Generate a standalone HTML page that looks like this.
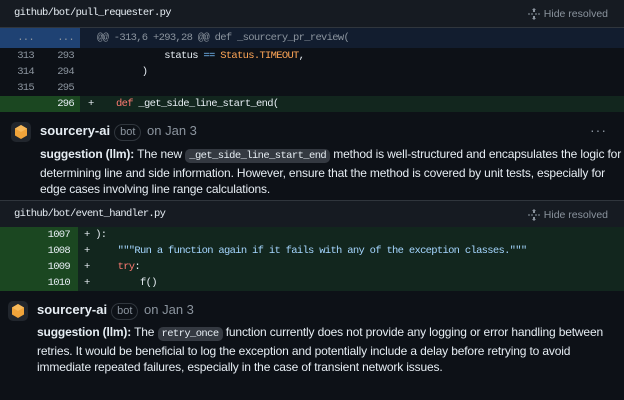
<!DOCTYPE html><html><head><style>
*{margin:0;padding:0;box-sizing:border-box}
body{width:624px;height:400px;background:#0d1117;font-family:"Liberation Sans",sans-serif;color:#e6edf3;overflow:hidden;position:relative}
.mono{font-family:"Liberation Mono",monospace;letter-spacing:-0.7px}
.hdr{position:absolute;left:0;width:624px;height:28px;background:#161b22;border-bottom:1px solid #30363d}
.hdr .f{position:absolute;left:14px;top:7px;font-size:10.5px;color:#e6edf3}
.hdr .h{position:absolute;right:16px;top:8px;font-size:10.5px;color:#8b949e}
.hdr .h svg{position:absolute;left:-16px;top:0}
.row{position:absolute;left:0;width:624px;height:16px;font-size:10.5px;line-height:16px}
.n{position:absolute;width:34px;text-align:right;color:#8b949e;font-family:"Liberation Mono",monospace;letter-spacing:-0.7px}
.c{position:absolute;white-space:pre}
.cm{position:absolute;left:0;width:624px;background:#0d1117}
.av{position:absolute;width:20px;height:20px;border-radius:5px;background:#21262d}
.av svg{position:absolute;left:3px;top:3px}
.nm{position:absolute;font-size:13px;font-weight:bold}
.bot{display:inline-block;border:1px solid #30363d;border-radius:9px;padding:0 5px;font-size:11px;color:#8b949e;font-weight:normal;margin-left:4px;line-height:15px}
.dt{color:#8b949e;font-weight:normal;margin-left:2px}
.tx{position:absolute;font-size:12px;line-height:16.5px;width:590px;letter-spacing:-0.15px}
.tx code{font-family:"Liberation Mono",monospace;font-size:10.5px;letter-spacing:-0.6px;background:#343941;border-radius:5px;padding:1px 4px}
.dots{position:absolute;right:17px;color:#8b949e;font-size:14px;letter-spacing:1px}
</style></head><body>
<div class="hdr" style="top:0"><span class="f mono">github/bot/pull_requester.py</span><span class="h"><svg width="12" height="12" viewBox="0 0 12 12" fill="#8b949e"><path d="M6 0l2 2H7v2H5V2H4zM6 12l2-2H7V8H5v2H4zM0 5.5h2v1H0zM3 5.5h2v1H3zM7 5.5h2v1H7zM10 5.5h2v1h-2z"/></svg>Hide resolved</span></div>
<div class="row" style="top:28px;height:20px;line-height:20px;background:#121d2f">
<div style="position:absolute;left:0;width:80px;height:20px;background:#1f4273"></div>
<span class="n" style="left:0;color:#8b949e">...</span><span class="n" style="left:40px;color:#8b949e">...</span>
<span class="c mono" style="left:97px;color:#8b949e">@@ -313,6 +293,28 @@ def _sourcery_pr_review(</span></div>
<div class="row" style="top:48px"><span class="n" style="left:0">313</span><span class="n" style="left:40px">293</span><span class="c mono" style="left:97px">            status <span style="color:#79c0ff">==</span> <span style="color:#ffa657">Status.TIMEOUT</span>,</span></div>
<div class="row" style="top:64px"><span class="n" style="left:0">314</span><span class="n" style="left:40px">294</span><span class="c mono" style="left:97px">        )</span></div>
<div class="row" style="top:80px"><span class="n" style="left:0">315</span><span class="n" style="left:40px">295</span></div>
<div class="row" style="top:96px;background:#12261e"><div style="position:absolute;left:0;width:80px;height:16px;background:#1b4721"></div><span class="n" style="left:40px;color:#e6edf3">296</span><span class="c mono" style="left:88px">+    <span style="color:#ff7b72">def</span> _get_side_line_start_end(</span></div>
<div class="cm" style="top:112px;height:88px">
<div class="av" style="left:11px;top:10px"><svg width="14" height="14" viewBox="0 0 14 14"><path d="M7 0l6 3.5v7L7 14 1 10.5v-7z" fill="#f0a43a"/><path d="M7 0l6 3.5L7 7 1 3.5z" fill="#f7b95a"/></svg></div>
<div class="nm" style="left:40px;top:11px">sourcery-ai<span class="bot">bot</span> <span class="dt">on Jan 3</span></div>
<div class="tx" style="left:40px;top:34px"><b>suggestion (llm):</b> The new <code>_get_side_line_start_end</code> method is well-structured and encapsulates the logic for determining line and side information. However, ensure that the method is covered by unit tests, especially for edge cases involving line range calculations.</div>
<div class="dots" style="top:10px">···</div></div>
<div class="hdr" style="top:200px;border-top:1px solid #30363d"><span class="f mono">github/bot/event_handler.py</span><span class="h"><svg width="12" height="12" viewBox="0 0 12 12" fill="#8b949e"><path d="M6 0l2 2H7v2H5V2H4zM6 12l2-2H7V8H5v2H4zM0 5.5h2v1H0zM3 5.5h2v1H3zM7 5.5h2v1H7zM10 5.5h2v1h-2z"/></svg>Hide resolved</span></div>
<div style="position:absolute;left:0;top:227px;width:624px;height:64px;background:#12261e"></div>
<div style="position:absolute;left:0;top:227px;width:78px;height:64px;background:#1b4721"></div>
<div class="row" style="top:227px"><span class="n" style="left:36px;color:#e6edf3">1007</span><span class="c mono" style="left:84px">+ ):</span></div>
<div class="row" style="top:243px"><span class="n" style="left:36px;color:#e6edf3">1008</span><span class="c mono" style="left:84px">+     <span style="color:#a5d6ff">"""Run a function again if it fails with any of the exception classes."""</span></span></div>
<div class="row" style="top:259px"><span class="n" style="left:36px;color:#e6edf3">1009</span><span class="c mono" style="left:84px">+     <span style="color:#ff7b72">try</span>:</span></div>
<div class="row" style="top:275px"><span class="n" style="left:36px;color:#e6edf3">1010</span><span class="c mono" style="left:84px">+         f()</span></div>
<div class="cm" style="top:291px;height:109px">
<div class="av" style="left:8px;top:10px"><svg width="14" height="14" viewBox="0 0 14 14"><path d="M7 0l6 3.5v7L7 14 1 10.5v-7z" fill="#f0a43a"/><path d="M7 0l6 3.5L7 7 1 3.5z" fill="#f7b95a"/></svg></div>
<div class="nm" style="left:37px;top:11px">sourcery-ai<span class="bot">bot</span> <span class="dt">on Jan 3</span></div>
<div class="tx" style="left:37px;top:33px"><b>suggestion (llm):</b> The <code>retry_once</code> function currently does not provide any logging or error handling between retries. It would be beneficial to log the exception and potentially include a delay before retrying to avoid immediate repeated failures, especially in the case of transient network issues.</div>
</div>
</body></html>
